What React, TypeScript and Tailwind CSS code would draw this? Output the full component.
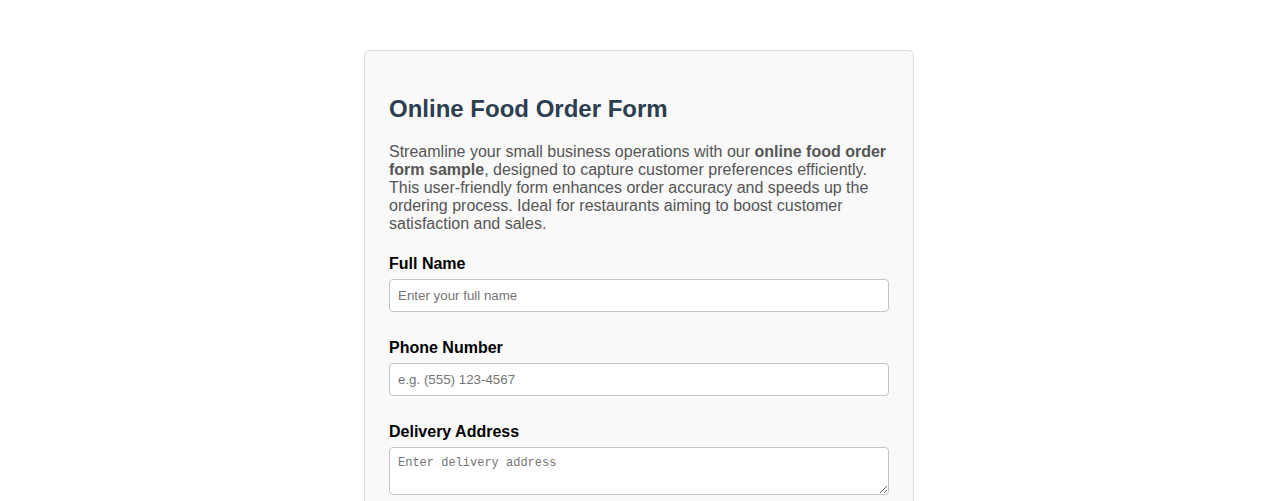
const fields = [
  { label: "Full Name", placeholder: "Enter your full name" },
  { label: "Phone Number", placeholder: "e.g. (555) 123-4567" },
];

const App = () => {
  return (
    <div className="min-h-screen bg-white font-['Liberation_Sans',Arial,sans-serif]">
      <div className="mx-auto mt-[50px] w-[550px] rounded-[5px] border border-[#dddddd] bg-[#f9f9f9] px-[24px] pt-[44px] pb-[24px]">
        <h2 className="mb-[20px] text-[24px] leading-[27.6px] font-bold text-[#2c3e50]">
          Online Food Order Form
        </h2>
        <p className="mb-[22px] text-[16px] leading-[18px] text-[#555555]">
          Streamline your small business operations with our{" "}
          <strong className="font-bold">online food order form sample</strong>, designed to
          capture customer preferences efficiently. This user-friendly form enhances order
          accuracy and speeds up the ordering process. Ideal for restaurants aiming to boost
          customer satisfaction and sales.
        </p>

        {fields.map((f) => (
          <div key={f.label} className="mb-[27px]">
            <label className="mb-[6px] block text-[16px] leading-[18px] font-bold text-black">
              {f.label}
            </label>
            <input
              type="text"
              placeholder={f.placeholder}
              className="block h-[33px] w-full rounded-[4px] border border-[#c4c4c4] bg-white px-[8px] text-[13.33px] text-black placeholder:text-[#757575] outline-none"
            />
          </div>
        ))}

        <div className="mb-[25px]">
          <label className="mb-[6px] block text-[16px] leading-[18px] font-bold text-black">
            Delivery Address
          </label>
          <textarea
            placeholder="Enter delivery address"
            className="block h-[48px] w-full rounded-[4px] border border-[#c4c4c4] bg-white px-[8px] py-[8px] font-['Liberation_Mono',monospace] text-[12px] leading-[14px] text-black placeholder:text-[#757575] outline-none"
          />
        </div>
      </div>
    </div>
  );
};

export default App;
